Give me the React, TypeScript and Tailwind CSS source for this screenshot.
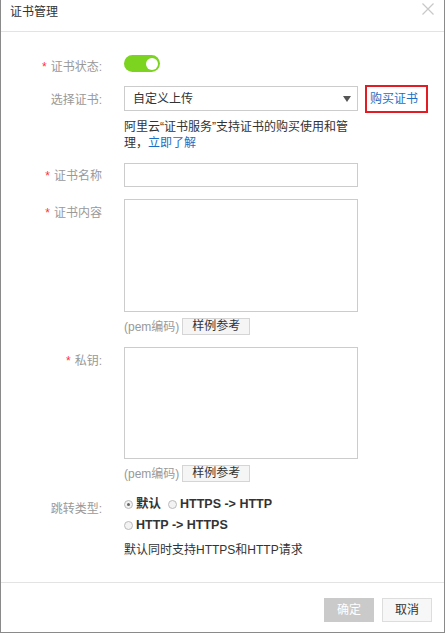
import { useState } from "react";

const font = "font-['Liberation_Sans','Noto_Sans_CJK_SC',sans-serif]";

function Label({ text, required, pt }: { text: string; required?: boolean; pt: string }) {
  return (
    <div className={`w-[101px] shrink-0 text-right text-[12px] leading-[18px] text-[#999] ${pt}`}>
      {required && <span className="mr-[4px] text-[#f33]">*</span>}
      {text}
    </div>
  );
}

function PemLine({ mt }: { mt: string }) {
  return (
    <div className={`flex h-[17px] items-center ${mt}`}>
      <span className="text-[12px] text-[#999]">(pem编码)</span>
      <button className="ml-[3px] h-[17px] w-[68px] border border-[#d5d5d5] bg-[#f5f5f5] text-[12px] leading-[15px] text-[#333]">
        样例参考
      </button>
    </div>
  );
}

function Radio({ checked }: { checked?: boolean }) {
  return (
    <span className="mr-[3px] inline-flex h-[9px] w-[9px] items-center justify-center rounded-full border border-[#bbb] bg-[#f3f3f3]">
      {checked && <span className="h-[3px] w-[3px] rounded-full bg-[#666]" />}
    </span>
  );
}

export default function App() {
  const [enabled, setEnabled] = useState(true);
  const [redirect, setRedirect] = useState("default");

  return (
    <div className={`flex h-[633px] w-[445px] flex-col border-x border-b border-[#8a8a8a] bg-white ${font}`}>
      {/* header */}
      <div className="flex h-[32px] shrink-0 items-start justify-between border-b border-[#e3e3e3] pl-[9px] pr-[9px]">
        <span className="mt-[3px] text-[12px] leading-[18px] text-[#333]">证书管理</span>
        <svg width="14" height="14" viewBox="0 0 14 14" className="mt-[2px]">
          <path d="M1.5 1.5 L12.5 12.5 M12.5 1.5 L1.5 12.5" stroke="#c8c8c8" strokeWidth="1.2" />
        </svg>
      </div>

      {/* body */}
      <div className="flex-1 pt-[23px]">
        {/* status */}
        <div className="flex">
          <Label text="证书状态:" required pt="pt-[3px]" />
          <div className="ml-[22px]">
            <button
              onClick={() => setEnabled(!enabled)}
              className={`flex h-[17px] w-[36px] items-center rounded-full px-[2px] ${enabled ? "justify-end bg-[#7cd320]" : "justify-start bg-[#ccc]"}`}
            >
              <span className="h-[12px] w-[12px] rounded-full bg-white" />
            </button>
          </div>
        </div>

        {/* select */}
        <div className="mt-[10px] flex">
          <Label text="选择证书:" pt="pt-[5px]" />
          <div className="ml-[22px]">
            <div className="flex items-start">
              <div className="flex h-[25px] w-[234px] items-center justify-between border border-[#ccc] bg-white pl-[8px] pr-[6px]">
                <span className="text-[12px] text-[#333]">自定义上传</span>
                <svg width="8" height="6" viewBox="0 0 8 6">
                  <path d="M0 0 H8 L4 6 Z" fill="#555" />
                </svg>
              </div>
              <span className="-mt-[1px] ml-[7px] flex h-[28px] w-[63px] items-center border-2 border-[#e31b23] pl-[3px]">
                <a className="text-[12px] text-[#1a6fc4]">购买证书</a>
              </span>
            </div>
            <p className="mt-[6px] w-[236px] text-[12px] leading-[16px] text-[#333]">
              阿里云“证书服务”支持证书的购买使用和管
              <br />
              理，<a className="text-[#1a6fc4]">立即了解</a>
            </p>
          </div>
        </div>

        {/* name */}
        <div className="mt-[12px] flex">
          <Label text="证书名称" required pt="pt-[4px]" />
          <input className="ml-[22px] h-[24px] w-[234px] border border-[#ccc] outline-none" />
        </div>

        {/* content */}
        <div className="mt-[12px] flex">
          <Label text="证书内容" required pt="pt-[5px]" />
          <div className="ml-[22px]">
            <textarea className="block h-[113px] w-[234px] resize-none border border-[#ccc] outline-none" />
            <PemLine mt="mt-[6px]" />
          </div>
        </div>

        {/* key */}
        <div className="mt-[12px] flex">
          <Label text="私钥:" required pt="pt-[5px]" />
          <div className="ml-[22px]">
            <textarea className="block h-[112px] w-[234px] resize-none border border-[#ccc] outline-none" />
            <PemLine mt="mt-[6px]" />
          </div>
        </div>

        {/* redirect */}
        <div className="mt-[12px] flex">
          <Label text="跳转类型:" pt="pt-[6px]" />
          <div className="ml-[22px] text-[12px] text-[#333]">
            <div className="flex h-[21px] items-center text-[12.5px] font-bold">
              <label className="flex items-center" onClick={() => setRedirect("default")}>
                <Radio checked={redirect === "default"} />
                默认
              </label>
              <label className="ml-[7px] flex items-center" onClick={() => setRedirect("s2h")}>
                <Radio checked={redirect === "s2h"} />
                HTTPS -&gt; HTTP
              </label>
            </div>
            <div className="flex h-[21px] items-center text-[12.5px] font-bold">
              <label className="flex items-center" onClick={() => setRedirect("h2s")}>
                <Radio checked={redirect === "h2s"} />
                HTTP -&gt; HTTPS
              </label>
            </div>
            <p className="mt-[5px] leading-[18px]">默认同时支持HTTPS和HTTP请求</p>
          </div>
        </div>
      </div>

      {/* footer */}
      <div className="flex h-[50px] shrink-0 items-start justify-end gap-[8px] border-t border-[#e3e3e3] pr-[12px] pt-[15px]">
        <button className="h-[24px] w-[50px] bg-[#cacaca] text-[12px] text-white">确定</button>
        <button className="h-[24px] w-[50px] border border-[#ddd] bg-[#f7f7f7] text-[12px] text-[#333]">取消</button>
      </div>
    </div>
  );
}
